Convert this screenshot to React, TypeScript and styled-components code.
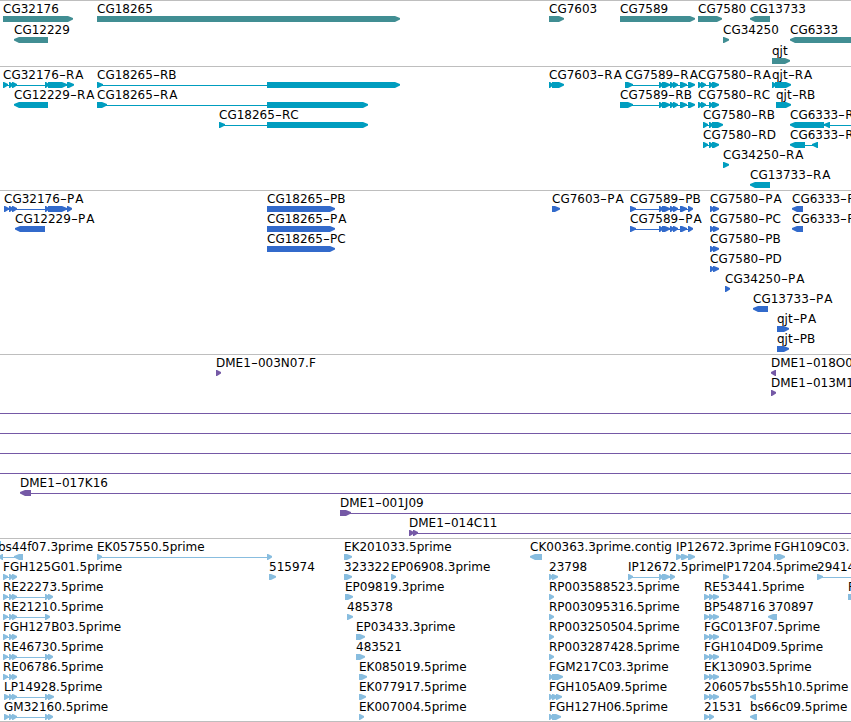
import styled, { createGlobalStyle } from "styled-components";

const GlobalStyle = createGlobalStyle`
    body {
        margin: 0;
        background-color: #ffffff;
        overflow: hidden;
    }
`

const Browser = styled.main`
    display: flex;
    flex-direction: column;
    width: 851px;
    height: 722px;
    box-sizing: border-box;
    overflow: hidden;
    border-bottom: 1px solid #bebebe;
`

const TrackPanel = styled.section<{ $gap: number }>`
    border-top: 1px solid #bebebe;
    padding-bottom: ${({ $gap }) => $gap}px;
    flex: none;
`

const Row = styled.div<{ $height: number }>`
    position: relative;
    height: ${({ $height }) => $height}px;
`

const Label = styled.span<{ $x: number }>`
    position: absolute;
    left: ${({ $x }) => $x}px;
    top: 1px;
    color: #000000;
    font-family: "DejaVu Sans", sans-serif;
    font-size: 12px;
    font-kerning: none;
    line-height: 15px;
    white-space: nowrap;
`

const Dash = styled.span`
    display: inline-block;
    padding: 0 1.4px;
    transform: scaleX(1.6);
`

const Suffix = styled.span<{ $wide: boolean }>`
    letter-spacing: ${({ $wide }) => ($wide ? "1px" : "0")};
`

const Glyphs = styled.svg`
    display: block;
    position: absolute;
    left: 0;
    top: 15px;
`

type Span = [number, number]

interface Feature {
    name: string
    x: number
    exons: Span[]
    reverse?: boolean
    line?: Span
}

interface Track {
    color: string
    rowHeight: number
    gap: number
    rows: Feature[][]
}

const END = 851

const fwd = (name: string, x: number, exons: Span[], line?: Span): Feature => ({ name, x, exons, line })
const rev = (name: string, x: number, exons: Span[], line?: Span): Feature => ({ name, x, exons, line, reverse: true })
const through = (): Feature => ({ name: "", x: 0, exons: [], line: [0, END] })

const cg7589: Span[] = [[659, 663], [662, 670], [670, 674], [673, 678], [680, 687], [688, 695]]
const cg7589p: Span[] = [[630, 636], [659, 663], [662, 670], [670, 674], [673, 678], [680, 687], [688, 693]]
const cg7580: Span[] = [[698, 702], [701, 706], [709, 713], [712, 719]]
const cg7580p: Span[] = [[710, 714], [713, 719]]
const head: Span[] = [[3, 8], [9, 13], [12, 17]]
const triple: Span[] = [[704, 709], [709, 714], [713, 719]]

const genes: Feature[][] = [
    [
        fwd("CG32176", 3, [[3, 73]]),
        fwd("CG18265", 97, [[97, 400]]),
        fwd("CG7603", 549, [[549, 564]]),
        fwd("CG7589", 620, [[620, 695]]),
        fwd("CG7580", 698, [[698, 722]]),
        rev("CG13733", 750, [[750, 770]]),
    ],
    [
        rev("CG12229", 14, [[14, 48]]),
        fwd("CG34250", 723, [[723, 729]]),
        rev("CG6333", 790, [[790, 860]]),
    ],
    [fwd("qjt", 772, [[772, 790]])],
]

const transcripts: Feature[][] = [
    [
        fwd("CG32176-RA", 3, [...head, [45, 49], [48, 67], [67, 74]]),
        fwd("CG18265-RB", 97, [[97, 103], [267, 400]]),
        fwd("CG7603-RA", 549, [[549, 553], [552, 564]]),
        fwd("CG7589-RA", 625, [[625, 633], ...cg7589]),
        fwd("CG7580-RA", 698, cg7580),
        fwd("qjt-RA", 772, [[772, 776], [775, 791]]),
    ],
    [
        rev("CG12229-RA", 14, [[14, 48]]),
        fwd("CG18265-RA", 97, [[97, 107], [267, 368]]),
        fwd("CG7589-RB", 620, [[620, 633], ...cg7589]),
        fwd("CG7580-RC", 698, cg7580),
        fwd("qjt-RB", 776, [[776, 791]]),
    ],
    [
        fwd("CG18265-RC", 219, [[219, 225], [267, 368]]),
        fwd("CG7580-RB", 703, [[703, 708], [709, 713], [712, 723]]),
        rev("CG6333-RB", 790, [[790, 824], [824, 830]], [824, END]),
    ],
    [
        fwd("CG7580-RD", 703, [[703, 708], [709, 713], [712, 719]]),
        rev("CG6333-RA", 790, [[790, 805], [812, 818]]),
    ],
    [fwd("CG34250-RA", 723, [[723, 729]])],
    [rev("CG13733-RA", 750, [[750, 770]])],
]

const proteins: Feature[][] = [
    [
        fwd("CG32176-PA", 4, [[4, 9], [9, 13], [12, 17], [45, 49], [48, 67], [67, 72]]),
        fwd("CG18265-PB", 267, [[267, 335]]),
        fwd("CG7603-PA", 552, [[552, 560]]),
        fwd("CG7589-PB", 630, cg7589p),
        fwd("CG7580-PA", 710, cg7580p),
        rev("CG6333-PB", 792, [[792, 803]]),
    ],
    [
        rev("CG12229-PA", 15, [[15, 45]]),
        fwd("CG18265-PA", 267, [[267, 335]]),
        fwd("CG7589-PA", 630, cg7589p),
        fwd("CG7580-PC", 710, cg7580p),
        rev("CG6333-PA", 792, [[792, 803]]),
    ],
    [fwd("CG18265-PC", 267, [[267, 335]]), fwd("CG7580-PB", 710, cg7580p)],
    [fwd("CG7580-PD", 710, cg7580p)],
    [fwd("CG34250-PA", 725, [[725, 730]])],
    [rev("CG13733-PA", 753, [[753, 768]])],
    [fwd("qjt-PA", 777, [[777, 789]])],
    [fwd("qjt-PB", 777, [[777, 789]])],
]

const clones: Feature[][] = [
    [fwd("DME1-003N07.F", 216, [[216, 221]]), rev("DME1-018O07", 771, [[771, 776]])],
    [fwd("DME1-013M10", 771, [[771, 776]])],
    [through()],
    [through()],
    [through()],
    [through()],
    [rev("DME1-017K16", 20, [[20, 31]], [31, END])],
    [fwd("DME1-001J09", 340, [[340, 351]], [346, END])],
    [fwd("DME1-014C11", 409, [[409, 414], [413, 418]], [412, END])],
]

const ests: Feature[][] = [
    [
        rev("bs44f07.3prime", -2, [[-1, 3], [14, 23]]),
        fwd("EK057550.5prime", 97, [[97, 102], [267, 272]]),
        fwd("EK201033.5prime", 344, [[344, 352]]),
        rev("CK00363.3prime.contig", 530, [[530, 542]]),
        fwd("IP12672.3prime", 676, [[676, 682], [681, 688], [688, 695]]),
        fwd("FGH109C03.", 774, [[774, 779], [777, 785]]),
    ],
    [
        fwd("FGH125G01.5prime", 3, head),
        fwd("515974", 269, [[269, 276]]),
        fwd("323322", 344, [[344, 352]]),
        fwd("EP06908.3prime", 391, [[391, 396]]),
        fwd("23798", 549, [[549, 553], [552, 558]]),
        fwd("IP12672.5prime", 628, [[628, 633], [659, 663], [662, 670], [670, 675]]),
        fwd("IP17204.5prime", 723, [[723, 729]]),
        fwd("29414", 817, [[817, 823]], [820, END]),
    ],
    [
        fwd("RE22273.5prime", 3, [...head, [45, 49], [48, 53]]),
        fwd("EP09819.3prime", 345, [[345, 353]]),
        fwd("RP003588523.5prime", 549, [[549, 554]]),
        fwd("RE53441.5prime", 704, triple),
        fwd("RE", 848, [[848, 860]]),
    ],
    [
        fwd("RE21210.5prime", 3, [...head, [45, 50]]),
        fwd("485378", 347, [[347, 353]]),
        fwd("RP003095316.5prime", 549, [[549, 554]]),
        fwd("BP548716", 704, triple),
        rev("370897", 768, [[768, 777]]),
    ],
    [
        fwd("FGH127B03.5prime", 3, head),
        fwd("EP03433.3prime", 356, [[356, 365]]),
        fwd("RP003250504.5prime", 549, [[549, 554]]),
        fwd("FGC013F07.5prime", 704, triple),
    ],
    [
        fwd("RE46730.5prime", 3, [...head, [45, 49], [48, 53]]),
        fwd("483521", 356, [[356, 365]]),
        fwd("RP003287428.5prime", 549, [[549, 554]]),
        fwd("FGH104D09.5prime", 704, triple),
    ],
    [
        fwd("RE06786.5prime", 3, head),
        fwd("EK085019.5prime", 359, [[359, 367]]),
        fwd("FGM217C03.3prime", 549, [[549, 553], [552, 563]]),
        fwd("EK130903.5prime", 704, triple),
    ],
    [
        fwd("LP14928.5prime", 4, [[4, 9], [9, 13], [12, 17], [45, 49], [48, 54]]),
        fwd("EK077917.5prime", 359, [[359, 366]]),
        fwd("FGH105A09.5prime", 549, [[549, 553], [552, 558], [556, 562]]),
        fwd("206057", 704, triple),
        rev("bs55h10.5prime", 750, [[750, 756]]),
    ],
    [
        fwd("GM32160.5prime", 4, [[4, 9], [9, 13], [12, 17], [45, 49], [48, 53]]),
        fwd("EK007004.5prime", 359, [[359, 364]]),
        fwd("FGH127H06.5prime", 549, [[549, 553], [552, 561]]),
        fwd("21531", 704, [[704, 709], [709, 714]]),
        rev("bs66c09.5prime", 750, [[750, 757]]),
    ],
]

const tracks: Track[] = [
    { color: "#418e93", rowHeight: 21, gap: 2, rows: genes },
    { color: "#009dbf", rowHeight: 20, gap: 3, rows: transcripts },
    { color: "#326acb", rowHeight: 20, gap: 3, rows: proteins },
    { color: "#7559a6", rowHeight: 20, gap: 3, rows: clones },
    { color: "#88bddf", rowHeight: 20, gap: 2, rows: ests },
]

// one exon: a flat body with a slightly blunt 5px end
const exonPoints = ([a, b]: Span, reverse?: boolean) => {
    const tip = Math.min(5, b - a - 1)
    return reverse
        ? `${b},0 ${a + tip},0 ${a},2 ${a},3.6 ${a + tip},6 ${b},6`
        : `${a},0 ${b - tip},0 ${b},2 ${b},3.6 ${b - tip},6 ${a},6`
}

const FeatureGlyph = ({ feature }: { feature: Feature }) => {
    const { exons, line, reverse } = feature
    const [from, to] = line ?? [exons[0][0] + 1, exons[exons.length - 1][1] - 2]
    return (
        <g>
            {(line || exons.length > 1) && <rect x={from} y={3} width={to - from} height={1} />}
            {exons.map((exon) => (
                <polygon key={exon[0]} points={exonPoints(exon, reverse)} />
            ))}
        </g>
    )
}

const FeatureLabel = ({ name, x }: { name: string, x: number }) => {
    const [id, suffix] = name.split("-")
    return (
        <Label $x={x}>
            {id}
            {suffix && <Dash>-</Dash>}
            {suffix && <Suffix $wide={suffix.endsWith("A")}>{suffix}</Suffix>}
        </Label>
    )
}

const TrackView = ({ color, rowHeight, gap, rows }: Track) => {
    return (
        <TrackPanel $gap={gap}>
            {rows.map((features, i) => (
                <Row key={i} $height={rowHeight}>
                    <Glyphs width={END} height={6} fill={color}>
                        {features.map((feature, n) => (
                            <FeatureGlyph key={n} feature={feature} />
                        ))}
                    </Glyphs>
                    {features.map(({ name, x }) => name && <FeatureLabel key={name} name={name} x={x} />)}
                </Row>
            ))}
        </TrackPanel>
    )
}

export default function App() {
    return (
        <>
            <GlobalStyle />
            <Browser>
                {tracks.map((track) => (
                    <TrackView key={track.color} {...track} />
                ))}
            </Browser>
        </>
    )
}
